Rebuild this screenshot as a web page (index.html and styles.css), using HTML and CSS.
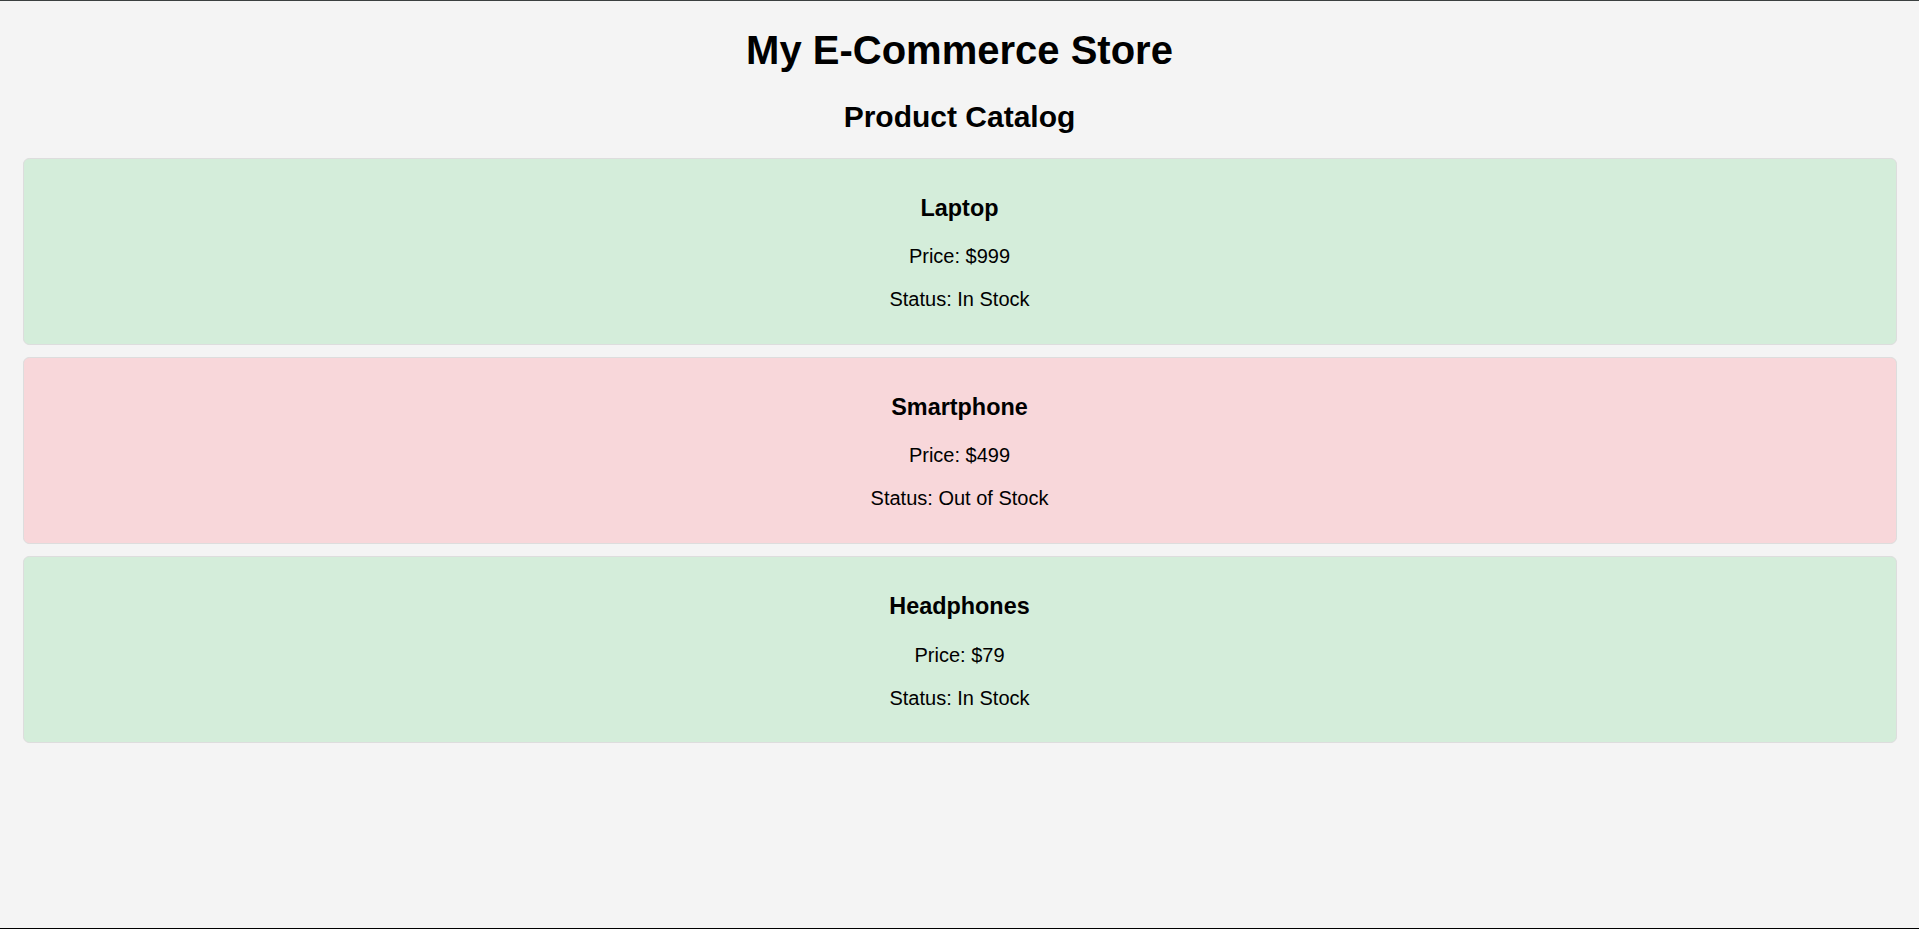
FILE: index.html
```html
<!DOCTYPE html>
<html lang="en">
<head>
<meta charset="UTF-8">
<title>My E-Commerce Store</title>
<link rel="stylesheet" href="styles.css">
</head>
<body>
  <h1 class="title">My E-Commerce Store</h1>
  <h2 class="subtitle">Product Catalog</h2>
  <div class="product-list">
    <div class="product in-stock">
      <h3 class="product-name">Laptop</h3>
      <p class="product-line">Price: $999</p>
      <p class="product-line">Status: In Stock</p>
    </div>
    <div class="product out-of-stock">
      <h3 class="product-name">Smartphone</h3>
      <p class="product-line">Price: $499</p>
      <p class="product-line">Status: Out of Stock</p>
    </div>
    <div class="product in-stock">
      <h3 class="product-name">Headphones</h3>
      <p class="product-line">Price: $79</p>
      <p class="product-line">Status: In Stock</p>
    </div>
  </div>
</body>
</html>
```
FILE: styles.css
```css
html {
  background: #f4f4f4;
}

body {
  margin: 0 10px;
  font-family: "Liberation Sans", Arial, sans-serif;
  font-size: 20px;
  color: #000;
  background: #f4f4f4;
}

body::before,
body::after {
  content: "";
  position: fixed;
  left: 0;
  right: 0;
  height: 1px;
  z-index: 10;
}

body::before {
  top: 0;
  background: #3b4040;
}

body::after {
  bottom: 0;
  background: #000;
}

.title {
  text-align: center;
  font-size: 40px;
  font-weight: bold;
  margin: 28px 0 26.8px;
}

.subtitle {
  text-align: center;
  font-size: 30px;
  font-weight: bold;
  margin: 24.9px 0 24px;
}

.product-list {
  display: block;
}

.product {
  margin: 12.5px;
  padding: 12.5px;
  border: 1.25px solid #ddd;
  border-radius: 6.25px;
  text-align: center;
}

.in-stock {
  background: #d4edda;
}

.out-of-stock {
  background: #f8d7da;
}

.product-name {
  font-size: 23.4px;
  font-weight: bold;
  margin: 23.4px 0;
}

.product-line {
  font-size: 20px;
  margin: 20px 0;
}
```
